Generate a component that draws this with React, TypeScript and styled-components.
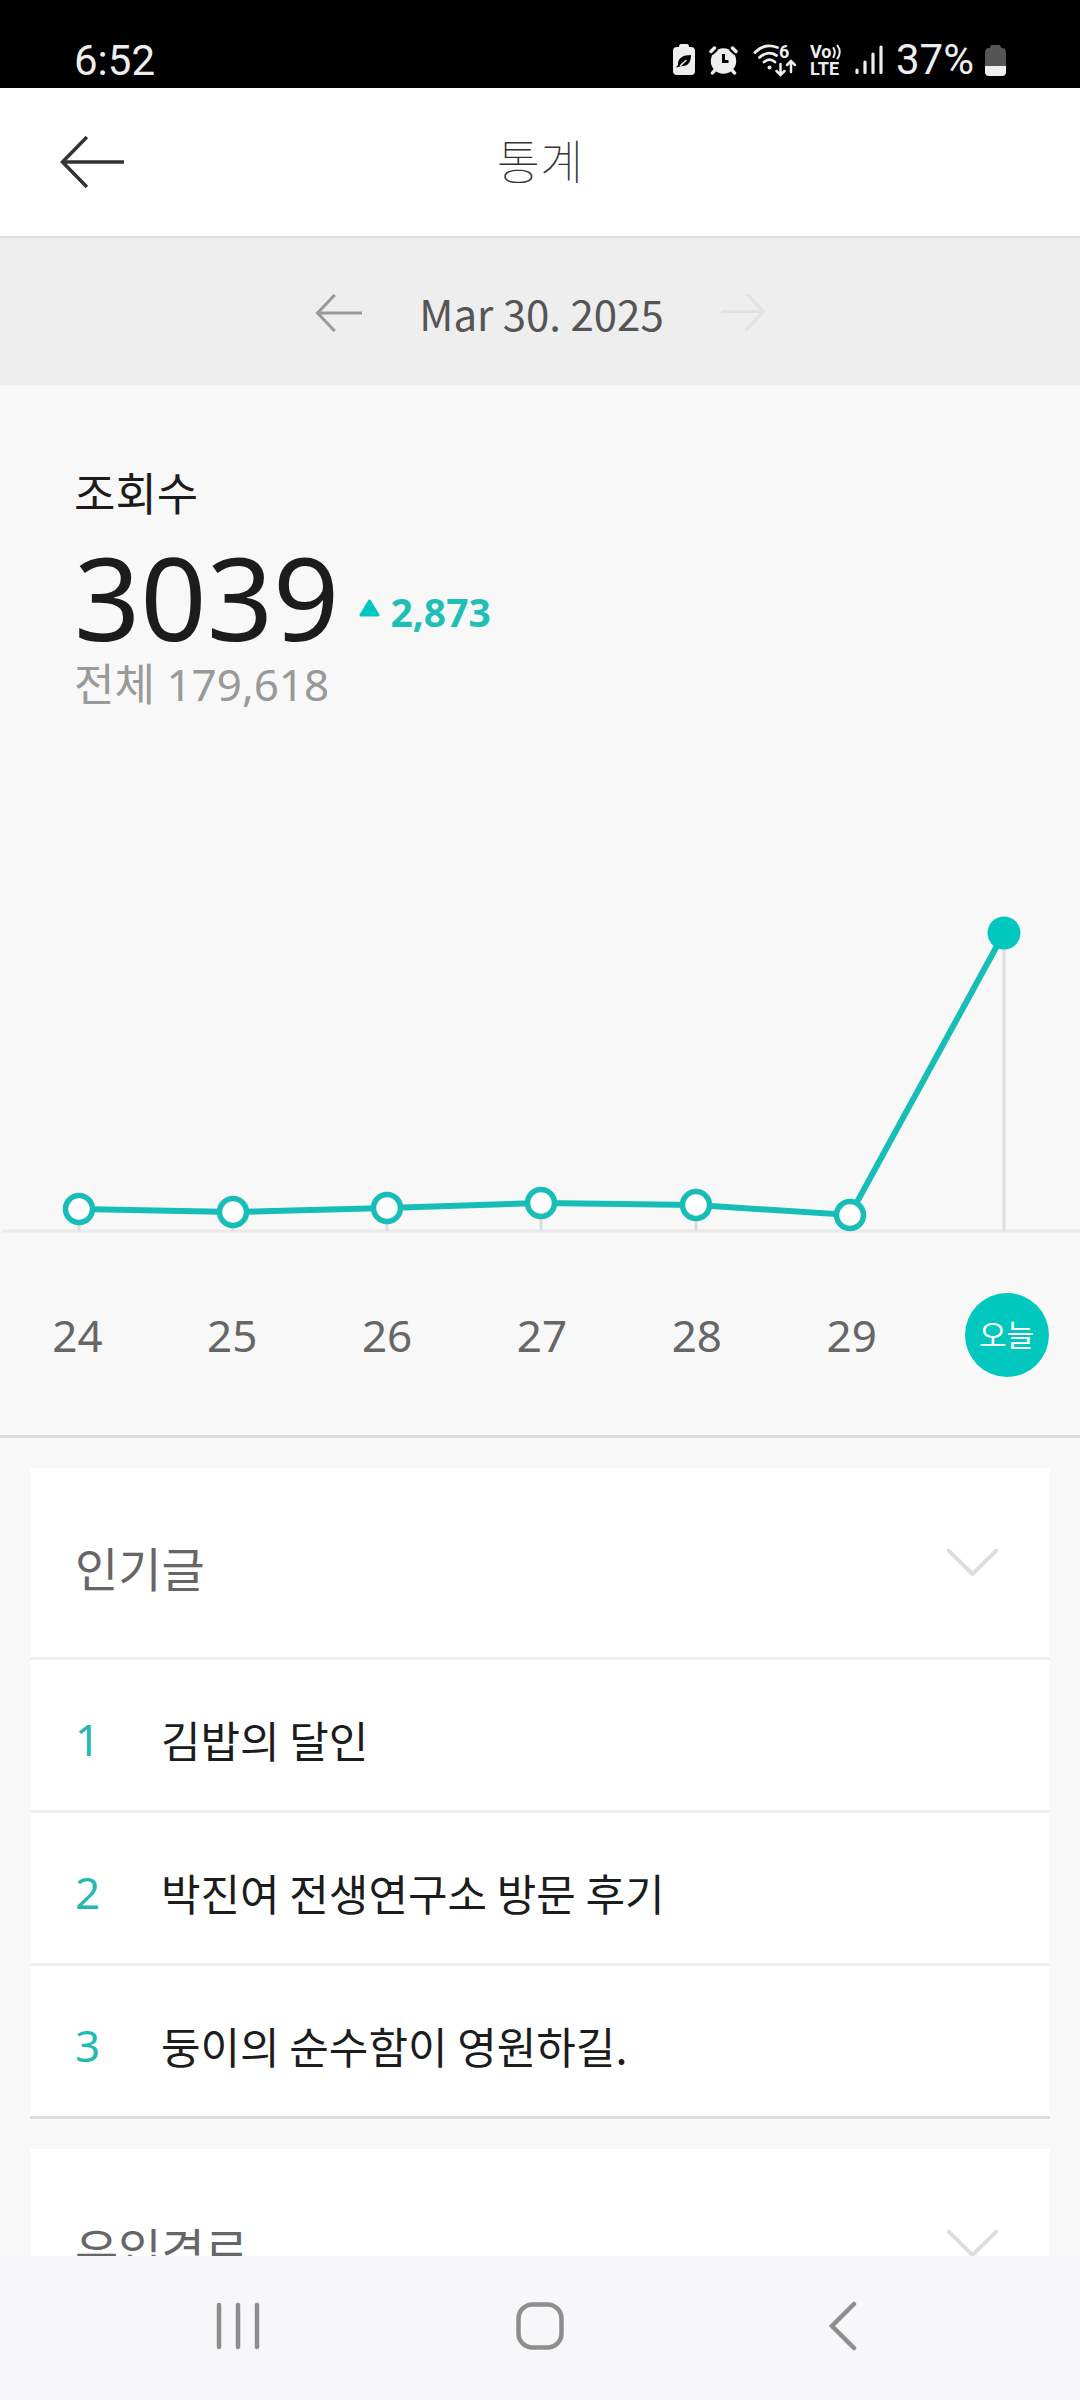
import React from "react";
import styled, { createGlobalStyle } from "styled-components";

const color = {
  accent: "#00c8be",
  line: "#17beb7",
  ink: "#1c1c1c",
  muted: "#666",
  faint: "#999",
  rule: "#ddd",
  ruleSoft: "#eee",
  page: "#f8f8f8",
  status: "#eee",
};

const latin = `"Noto Sans", "Noto Sans CJK KR", sans-serif`;
const korean = `"Noto Sans CJK KR", "Noto Sans", sans-serif`;

const GlobalStyle = createGlobalStyle`
  *, *::before, *::after { box-sizing: border-box; }
  body { margin: 0; background: ${color.page}; font-family: ${korean}; color: ${color.ink}; }
  h1, h2, p, ol { margin: 0; padding: 0; font-weight: 400; }
  svg { display: block; flex: none; }
`;

const Shell = styled.div`
  display: flex;
  flex-direction: column;
  height: 100vh;
  overflow: hidden;
`;

const StatusBar = styled.div`
  flex: none;
  display: flex;
  justify-content: space-between;
  align-items: flex-end;
  height: 88px;
  padding: 0 74px 7px;
  background: #000;
  color: ${color.status};
  font: 400 42px/40px Roboto, sans-serif;
`;

const StatusIcons = styled.div`
  display: flex;
  align-items: center;
  gap: 13px;
`;

const Charge = styled.span`
  display: flex;
  align-items: center;
  gap: 11px;
`;

const AppBar = styled.header`
  flex: none;
  display: grid;
  grid-template-columns: 1fr auto 1fr;
  align-items: center;
  height: 150px;
  padding: 0 60px;
  background: #fff;
  border-bottom: 2px solid ${color.rule};
`;

const IconButton = styled.button`
  display: flex;
  align-items: center;
  justify-content: center;
  justify-self: start;
  padding: 0;
  border: 0;
  background: none;
  cursor: pointer;
`;

const AppTitle = styled.h1`
  padding-bottom: 6px;
  font-size: 47px;
  line-height: 64px;
  font-weight: 100;
  color: #333;
`;

const Scroller = styled.main`
  flex: 1;
  min-height: 0;
  overflow: hidden auto;
  scrollbar-width: none;
`;

const DateBar = styled.nav`
  display: flex;
  justify-content: center;
  height: 147px;
  padding-top: 2px;
  background: ${color.ruleSoft};
  color: #555;
  font-size: 42px;
  line-height: 64px;
`;

const DatePicker = styled.div`
  display: flex;
  align-items: center;
  justify-content: space-between;
  width: 450px;
`;

const Summary = styled.section`
  display: flex;
  flex-direction: column;
  padding: 75px 74px 0;
`;

const SummaryLabel = styled.h2`
  font-size: 45px;
  line-height: 64px;
`;

const Figures = styled.div`
  display: flex;
  align-items: flex-end;
  gap: 20px;
  height: 136px;
`;

const Views = styled.p`
  font: 400 116px/128px ${latin};
`;

const Delta = styled.p`
  display: flex;
  align-items: center;
  gap: 10px;
  padding-bottom: 24px;
  color: #1fbfb8;
  font: 700 39px/48px ${latin};
`;

const Total = styled.p`
  color: ${color.faint};
  font: 400 44px/48px ${latin};
`;

const ChartSection = styled.section`
  padding-top: 208px;
  border-bottom: 3px solid ${color.rule};
`;

const Plot = styled.svg`
  width: 100%;
  height: auto;
`;

const Days = styled.div`
  display: grid;
  grid-template-columns: repeat(7, 1fr);
  align-items: center;
  height: 201px;
  margin-right: -4px;
`;

const Day = styled.button<{ $today?: boolean }>`
  justify-self: center;
  width: 84px;
  height: 84px;
  padding: 0;
  border: 0;
  border-radius: 50%;
  background: ${(p) => (p.$today ? color.accent : "transparent")};
  color: ${(p) => (p.$today ? "#fff" : color.muted)};
  font: 400 ${(p) => (p.$today ? "30px" : "44px")} / 84px ${latin};
  cursor: pointer;
`;

const Cards = styled.div`
  display: flex;
  flex-direction: column;
  gap: 30px;
  padding: 30px;
`;

const Card = styled.section`
  background: #fff;
  border-bottom: 3px solid ${color.rule};
`;

const CardHead = styled.div`
  display: flex;
  align-items: center;
  justify-content: space-between;
  height: 189px;
  padding: 0 52px 0 45px;
`;

const CardTitle = styled.h2`
  padding-top: 8px;
  color: ${color.muted};
  font-size: 47px;
  line-height: 64px;
`;

const Posts = styled.ol`
  list-style: none;
`;

const Post = styled.li`
  border-top: 3px solid ${color.ruleSoft};
`;

const PostLink = styled.a`
  display: grid;
  grid-template-columns: 86px 1fr;
  align-items: center;
  height: 150px;
  padding: 8px 45px 0;
  color: inherit;
  text-decoration: none;
  font-size: 43px;
  line-height: 64px;
`;

const Rank = styled.span`
  color: #24b8b2;
  font-family: ${latin};
  font-size: 44px;
`;

const SystemNav = styled.nav`
  flex: none;
  display: flex;
  align-items: center;
  justify-content: center;
  gap: 238px;
  height: 144px;
  padding-bottom: 4px;
  background: #f7f7fa;
`;

function ArrowLeft({ w, h, stroke, sw }: { w: number; h: number; stroke: string; sw: number }) {
  const mid = h / 2;
  return (
    <svg width={w} height={h} viewBox={`0 0 ${w} ${h}`} fill="none" stroke={stroke} strokeWidth={sw}>
      <path d={`M${w} ${mid}H3M${w * 0.42} 1L2.5 ${mid}L${w * 0.42} ${h - 1}`} />
    </svg>
  );
}

function ArrowRight() {
  return (
    <svg width="44" height="37" viewBox="0 0 44 37" fill="none" stroke="#e2e2e2" strokeWidth="3">
      <path d="M0 17.5H42M25 -1L42.5 17.5L25 36" />
    </svg>
  );
}

function Chevron() {
  return (
    <svg width="51" height="27" viewBox="0 0 51 27" fill="none" stroke="#ddd" strokeWidth="4">
      <path d="M0 0L25.5 25L51 0" />
    </svg>
  );
}

function PowerSaveIcon() {
  return (
    <svg width="22" height="32" viewBox="0 0 22 32">
      <path fill="#eee" d="M6 3Q6 0 8 0H14Q16 0 16 3H18Q22 3 22 7V27Q22 31 18 31H4Q0 31 0 27V7Q0 3 4 3Z" />
      <path d="M18 11C10 11 4.500 14 5 21L3 23.500L9 22C15 22.500 18 18 18 11Z" fill="#000" />
      <path d="M7 22L13.500 16" stroke="#eee" strokeWidth="1.500" />
    </svg>
  );
}

function AlarmIcon() {
  return (
    <svg width="30" height="29" viewBox="-1 0 30 29" fill="none" strokeLinecap="round">
      <circle cx="14.500" cy="15" r="12.700" fill="#eee" />
      <path d="M1.500 6.500L6.500 2M27.500 6.500L22.500 2" stroke="#000" strokeWidth="7" strokeLinecap="butt" />
      <path d="M2 5.500L5.500 2M27 5.500L23.500 2M6 24L3.500 27M23 24L25.500 27" stroke="#eee" strokeWidth="3.500" />
      <path d="M14.500 8V15.500H19.500" stroke="#000" strokeWidth="3" strokeLinecap="butt" />
    </svg>
  );
}

function WifiIcon() {
  return (
    <svg width="46" height="42" viewBox="-2 -5 46 42" fill="none" stroke="#eee" strokeWidth="2.800" strokeLinecap="round">
      <path d="M2 8.500C8.500 1.500 16 0.500 24.500 3.500M6.500 13.500C11.500 8.500 18 8 23.500 11.500M11 18C14.500 15 18.500 15 22 18" />
      <circle cx="16.500" cy="23.500" r="2" fill="#eee" stroke="none" />
      <path d="M27.500 20V30M23.500 27L27.500 31L31.500 27M38 28V18M34 21L38 17L42 21" strokeWidth="2.500" />
      <text x="26" y="14" fill="#eee" stroke="none" fontFamily="Roboto, sans-serif" fontWeight="700" fontSize="18">
        6
      </text>
    </svg>
  );
}

function VolteIcon() {
  return (
    <svg width="32" height="42" viewBox="2 -5 32 42" fill="#eee" fontFamily="Roboto, sans-serif" fontWeight="700">
      <text x="2" y="14" fontSize="18">Vo</text>
      <text x="2" y="31" fontSize="18">LTE</text>
      <path d="M25.500 4Q28 8 25.500 13M29.500 1.500Q34 8 29.500 14.500" fill="none" stroke="#eee" strokeWidth="2" strokeLinecap="round" />
    </svg>
  );
}

function SignalIcon() {
  return (
    <svg width="28" height="30" viewBox="0 0 28 30" stroke="#eee" strokeWidth="3.200" strokeLinecap="round">
      <path d="M2 25V27.500M10 17V27.500M18 9V27.500M26 2V27.500" />
    </svg>
  );
}

function BatteryIcon() {
  return (
    <svg width="21" height="31" viewBox="0 0 21 31">
      <path fill="#555" d="M5 3Q5 0 7 0H14Q16 0 16 3H17Q21 3 21 8V21H0V8Q0 3 4 3Z" />
      <path fill="#eee" d="M0 21H21V27Q21 31 17 31H4Q0 31 0 27Z" />
    </svg>
  );
}

// Chart points in plot units: x is the column, y the distance from the plot's top.
const points = [
  { x: 79, y: 293 },
  { x: 233, y: 296 },
  { x: 387, y: 292 },
  { x: 541, y: 287 },
  { x: 696, y: 289 },
  { x: 850, y: 299 },
  { x: 1004, y: 17 },
];
const baseline = 315;

function ViewsChart() {
  const last = points.length - 1;
  return (
    <Plot viewBox="0 0 1080 318" role="img" aria-label="조회수">
      <path d={`M2 ${baseline}H1080`} stroke="#eaeaea" strokeWidth="3" />
      {points.map((p) => (
        <path key={p.x} d={`M${p.x} ${p.y}V${baseline}`} stroke={color.rule} strokeWidth="3" />
      ))}
      <polyline points={points.map((p) => `${p.x},${p.y}`).join(" ")} fill="none" stroke={color.line} strokeWidth="6" />
      {points.map((p, i) =>
        i === last ? (
          <circle key={p.x} cx={p.x} cy={p.y} r="16.500" fill={color.accent} />
        ) : (
          <circle key={p.x} cx={p.x} cy={p.y} r="13.500" fill="#fff" stroke={color.line} strokeWidth="5.500" />
        ),
      )}
    </Plot>
  );
}

const days = ["24", "25", "26", "27", "28", "29", "오늘"];
const posts = ["김밥의 달인", "박진여 전생연구소 방문 후기", "둥이의 순수함이 영원하길."];

export default function App() {
  return (
    <Shell>
      <GlobalStyle />
      <StatusBar>
        <span>6:52</span>
        <StatusIcons>
          <PowerSaveIcon />
          <AlarmIcon />
          <WifiIcon />
          <VolteIcon />
          <SignalIcon />
          <Charge>
            37%
            <BatteryIcon />
          </Charge>
        </StatusIcons>
      </StatusBar>

      <AppBar>
        <IconButton aria-label="뒤로">
          <ArrowLeft w={64} h={52} stroke="#333" sw={3.5} />
        </IconButton>
        <AppTitle>통계</AppTitle>
      </AppBar>

      <Scroller>
        <DateBar>
          <DatePicker>
            <IconButton aria-label="이전 날짜">
              <ArrowLeft w={47} h={38} stroke="#999" sw={3} />
            </IconButton>
            <time dateTime="2025-03-30">Mar 30. 2025</time>
            <IconButton aria-label="다음 날짜" disabled>
              <ArrowRight />
            </IconButton>
          </DatePicker>
        </DateBar>

        <Summary>
          <SummaryLabel>조회수</SummaryLabel>
          <Figures>
            <Views>3039</Views>
            <Delta>
              <svg width="21" height="26" viewBox="0 0 21 26">
                <path d="M10.500 2L19 16H2Z" fill={color.accent} stroke={color.accent} strokeWidth="3" strokeLinejoin="round" />
              </svg>
              2,873
            </Delta>
          </Figures>
          <Total>전체 179,618</Total>
        </Summary>

        <ChartSection>
          <ViewsChart />
          <Days>
            {days.map((d, i) => (
              <Day key={d} $today={i === days.length - 1}>
                {d}
              </Day>
            ))}
          </Days>
        </ChartSection>

        <Cards>
          <Card>
            <CardHead>
              <CardTitle>인기글</CardTitle>
              <IconButton aria-label="인기글 펼치기">
                <Chevron />
              </IconButton>
            </CardHead>
            <Posts>
              {posts.map((title, i) => (
                <Post key={title}>
                  <PostLink href="#">
                    <Rank>{i + 1}</Rank>
                    {title}
                  </PostLink>
                </Post>
              ))}
            </Posts>
          </Card>
          <Card>
            <CardHead>
              <CardTitle>유입경로</CardTitle>
              <IconButton aria-label="유입경로 펼치기">
                <Chevron />
              </IconButton>
            </CardHead>
          </Card>
        </Cards>
      </Scroller>

      <SystemNav>
        <IconButton aria-label="최근 앱">
          <svg width="64" height="50" viewBox="0 0 64 50" stroke="#8e8e8e" strokeWidth="4.500" strokeLinecap="round">
            <path d="M13 4V46M32 4V46M51 4V46" />
          </svg>
        </IconButton>
        <IconButton aria-label="홈">
          <svg width="64" height="50" viewBox="0 0 64 50" fill="none" stroke="#8e8e8e" strokeWidth="4.500">
            <rect x="10.500" y="3.500" width="43" height="43" rx="14" />
          </svg>
        </IconButton>
        <IconButton aria-label="이전">
          <svg width="64" height="50" viewBox="0 0 64 50" fill="none" stroke="#8e8e8e" strokeWidth="4.500" strokeLinecap="round">
            <path d="M44 3L22 25L44 47" />
          </svg>
        </IconButton>
      </SystemNav>
    </Shell>
  );
}
